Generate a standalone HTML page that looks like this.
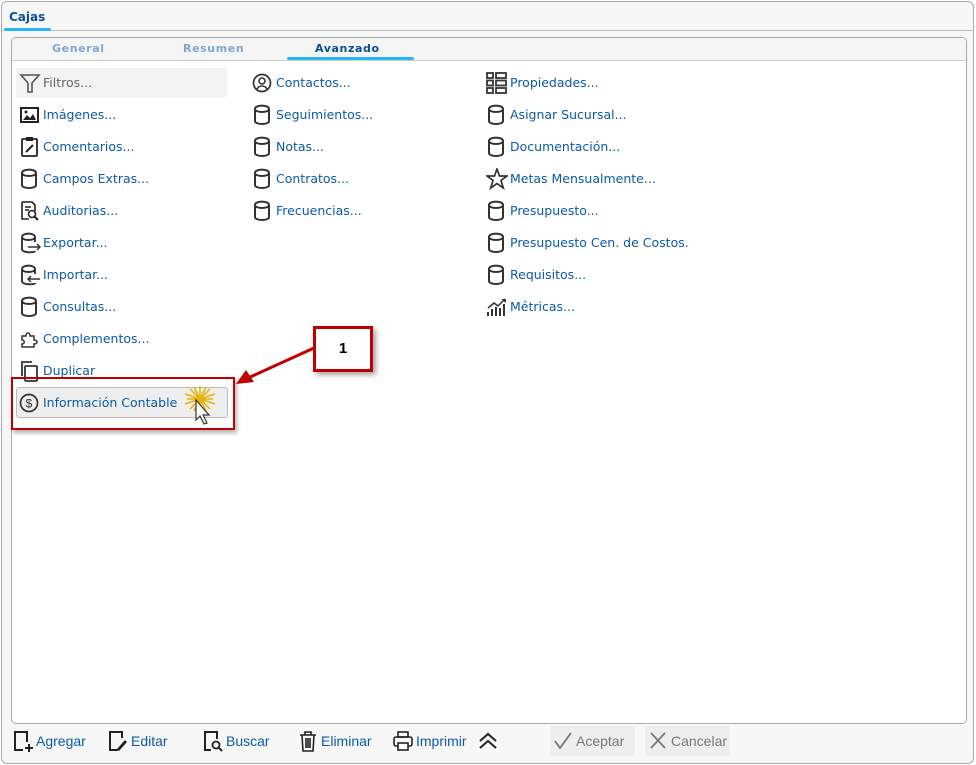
<!DOCTYPE html>
<html><head><meta charset="utf-8"><style>
*{margin:0;padding:0;box-sizing:border-box}
body{width:976px;height:765px;background:#fff;font-family:"DejaVu Sans","Liberation Sans",sans-serif;font-size:12.5px;position:relative;overflow:hidden}
.abs{position:absolute}
.outer{left:1px;top:1px;width:973px;height:763px;border:1px solid #aaa;border-radius:6px;background:#f7f7f7}
.panel{left:11px;top:37px;width:956px;height:687px;border:1px solid #aaa;border-radius:5px;background:#fff;overflow:hidden}
.it{position:absolute;height:26px;line-height:28px;color:#0b5aa8;white-space:nowrap}
.it svg{position:absolute;left:-24px;top:3px}
.tb{position:absolute;top:730px;height:22px;line-height:22px;color:#0b5aa8;font-family:"Liberation Sans",sans-serif;font-size:14px;white-space:nowrap}
.tb svg{position:absolute;left:-24px;top:0}
</style></head><body>
<div class="abs outer"></div>
<div class="abs" style="left:1px;top:30px;width:973px;border-top:1px solid #bbb"></div>
<div class="abs" style="left:9px;top:10px;font-weight:bold;color:#0b4f94;font-size:12px">Cajas</div>
<div class="abs" style="left:4px;top:28px;width:47px;height:3px;background:#29b6f6;border-radius:2px"></div>
<div class="abs panel">
 <div class="abs" style="left:0;top:0;width:956px;height:23px;background:#f5f5f5;border-bottom:1px solid #ccc"></div>
 <div class="abs" style="left:40px;top:4px;font-weight:bold;color:#7ea8d0;font-size:11px;letter-spacing:.6px">General</div>
 <div class="abs" style="left:171px;top:4px;font-weight:bold;color:#7ea8d0;font-size:11px;letter-spacing:.6px">Resumen</div>
 <div class="abs" style="left:303px;top:4px;font-weight:bold;color:#0b4f94;font-size:11px;letter-spacing:.6px">Avanzado</div>
 <div class="abs" style="left:275px;top:19px;width:127px;height:3px;background:#29b6f6;border-radius:2px"></div>
</div>
<svg width="0" height="0" style="position:absolute"><defs>
<g id="cyl" fill="none" stroke="#333" stroke-width="2"><path d="M3 5 C3 0.5 17 0.5 17 5 V17 C17 21 3 21 3 17 Z M3 5 C3 9 17 9 17 5"/></g>
</defs></svg>
<div class="abs" style="left:16px;top:68px;width:211px;height:30px;background:#f3f3f3;border-radius:2px"></div>
<div class="it" style="left:43px;top:69px;color:#666"><svg width="22" height="22"><path d="M2 3 H20 L13 11 V20 H9 V11 Z" fill="none" stroke="#555" stroke-width="1.6"/></svg>Filtros...</div>
<div class="it" style="left:43px;top:101px"><svg width="22" height="22"><rect x="2" y="4" width="17" height="14" fill="none" stroke="#222" stroke-width="2"/><path d="M4 16 L8 11 L11 14 L14 10 L17 16Z" fill="#222"/><circle cx="7" cy="8" r="1.5" fill="#222"/></svg>Imágenes...</div>
<div class="it" style="left:43px;top:133px"><svg width="22" height="22"><rect x="3" y="3" width="15" height="17" rx="1" fill="none" stroke="#222" stroke-width="1.8"/><rect x="7" y="1" width="7" height="4" fill="#222"/><path d="M7 16 L14 9" stroke="#222" stroke-width="2"/></svg>Comentarios...</div>
<div class="it" style="left:43px;top:165px"><svg width="22" height="22"><use href="#cyl"/></svg>Campos Extras...</div>
<div class="it" style="left:43px;top:197px"><svg width="22" height="22"><path d="M3 2 H13 L16 5 V11 M3 2 V19 H10" fill="none" stroke="#222" stroke-width="1.6"/><circle cx="13" cy="14" r="3.5" fill="none" stroke="#222" stroke-width="1.6"/><path d="M15.5 16.5 L19 20" stroke="#222" stroke-width="2"/><path d="M6 7H12M6 10H10" stroke="#222" stroke-width="1.4"/></svg>Auditorias...</div>
<div class="it" style="left:43px;top:229px"><svg width="22" height="22"><path d="M16 10 V5 C16 0.5 3 0.5 3 5 V17 C3 21 16 21 16 19 M3 5 C3 9 16 9 16 5" fill="none" stroke="#333" stroke-width="1.9"/><path d="M9 15H21M18 12L21 15L18 18" fill="none" stroke="#333" stroke-width="1.5"/></svg>Exportar...</div>
<div class="it" style="left:43px;top:261px"><svg width="22" height="22"><path d="M16 10 V5 C16 0.5 3 0.5 3 5 V17 C3 21 16 21 16 19 M3 5 C3 9 16 9 16 5" fill="none" stroke="#333" stroke-width="1.9"/><path d="M9 15H21M12 12L9 15L12 18" fill="none" stroke="#333" stroke-width="1.5"/></svg>Importar...</div>
<div class="it" style="left:43px;top:293px"><svg width="22" height="22"><use href="#cyl"/></svg>Consultas...</div>
<div class="it" style="left:43px;top:325px"><svg width="22" height="22"><path d="M3 8 H7 C7 4 11 4 11 8 H15 V12 C19 12 19 16 15 16 V19 H3 V16 C6 16 6 12 3 12Z" fill="none" stroke="#333" stroke-width="1.5"/></svg>Complementos...</div>
<div class="it" style="left:43px;top:357px"><svg width="22" height="22"><rect x="6" y="6" width="12" height="15" rx="1" fill="none" stroke="#333" stroke-width="1.8"/><path d="M3 16 V2 H13" fill="none" stroke="#333" stroke-width="1.8"/></svg>Duplicar</div>
<div class="abs" style="left:11px;top:377px;width:224px;height:53px;border:2px solid #c00000;box-shadow:2px 3px 4px rgba(0,0,0,.3)"></div>
<div class="abs" style="left:16px;top:387px;width:212px;height:31px;background:#eee;border:1px solid #bbb;border-radius:3px"></div>
<div class="it" style="left:43px;top:389px"><svg width="22" height="22"><circle cx="10" cy="11" r="8.5" fill="none" stroke="#333" stroke-width="1.7"/><text x="10" y="15.5" font-size="12" text-anchor="middle" fill="#333" font-family="Liberation Sans">$</text></svg>Información Contable</div>
<svg class="abs" style="left:180px;top:384px" width="40" height="44"><g stroke="#e8b000" stroke-width="1.5"><path d="M20 2L20 28M7 15H33M10 5L30 25M30 5L10 25M14 3L26 27M26 3L14 27M5 10L35 20M35 10L5 20"/></g><path d="M16 16 L16 36 L20 32 L24 40 L27 39 L23 31 L29 31 Z" fill="#fff" stroke="#333" stroke-width="1.2"/></svg>
<div class="abs" style="left:313px;top:326px;width:60px;height:46px;border:3px solid #c00000;background:#fff;box-shadow:3px 3px 5px rgba(0,0,0,.35);text-align:center;line-height:40px;font-family:'Liberation Sans',sans-serif;font-weight:bold;font-size:15px">1</div>
<svg class="abs" style="left:230px;top:340px" width="90" height="50"><path d="M84 8 L18 38" stroke="#c00000" stroke-width="3"/><path d="M6 44 L16 30 L24 42Z" fill="#c00000"/></svg>
<div class="it" style="left:276px;top:69px"><svg width="22" height="22"><circle cx="10" cy="11" r="8.5" fill="none" stroke="#333" stroke-width="1.7"/><circle cx="10" cy="9" r="3" fill="none" stroke="#333" stroke-width="1.6"/><path d="M5 17 C7 13 13 13 15 17" fill="none" stroke="#333" stroke-width="1.6"/></svg>Contactos...</div>
<div class="it" style="left:276px;top:101px"><svg width="22" height="22"><use href="#cyl"/></svg>Seguimientos...</div>
<div class="it" style="left:276px;top:133px"><svg width="22" height="22"><use href="#cyl"/></svg>Notas...</div>
<div class="it" style="left:276px;top:165px"><svg width="22" height="22"><use href="#cyl"/></svg>Contratos...</div>
<div class="it" style="left:276px;top:197px"><svg width="22" height="22"><use href="#cyl"/></svg>Frecuencias...</div>
<div class="it" style="left:510px;top:69px"><svg width="22" height="22"><g fill="none" stroke="#333" stroke-width="1.8"><rect x="1" y="1" width="6" height="5"/><rect x="1" y="8.5" width="6" height="5"/><rect x="1" y="16" width="6" height="5"/><rect x="10" y="1" width="10" height="5"/><rect x="10" y="8.5" width="10" height="5"/><rect x="10" y="16" width="10" height="5"/></g></svg>Propiedades...</div>
<div class="it" style="left:510px;top:101px"><svg width="22" height="22"><use href="#cyl"/></svg>Asignar Sucursal...</div>
<div class="it" style="left:510px;top:133px"><svg width="22" height="22"><use href="#cyl"/></svg>Documentación...</div>
<div class="it" style="left:510px;top:165px"><svg width="22" height="22"><path d="M11 1 L13.5 8 H21 L15 12.5 L17.3 20 L11 15.5 L4.7 20 L7 12.5 L1 8 H8.5Z" fill="none" stroke="#333" stroke-width="1.7"/></svg>Metas Mensualmente...</div>
<div class="it" style="left:510px;top:197px"><svg width="22" height="22"><use href="#cyl"/></svg>Presupuesto...</div>
<div class="it" style="left:510px;top:229px"><svg width="22" height="22"><use href="#cyl"/></svg>Presupuesto Cen. de Costos.</div>
<div class="it" style="left:510px;top:261px"><svg width="22" height="22"><use href="#cyl"/></svg>Requisitos...</div>
<div class="it" style="left:510px;top:293px"><svg width="22" height="22"><g stroke="#333" stroke-width="2"><path d="M2 20V16M6 20V13M10 20V11M14 20V12M18 20V8"/></g><path d="M2 12 L8 7 L12 10 L19 3" fill="none" stroke="#333" stroke-width="1.5"/><path d="M15 3H20V7Z" fill="#333"/></svg>Métricas...</div>
<div class="tb" style="left:36px"><svg width="22" height="22"><path d="M11 20H3V2H15V12" fill="none" stroke="#222" stroke-width="2"/><path d="M17 14V22M13 18H21" stroke="#222" stroke-width="2"/></svg>Agregar</div>
<div class="tb" style="left:131px"><svg width="22" height="22"><path d="M11 20H3V2H15V8" fill="none" stroke="#222" stroke-width="2"/><path d="M10 19L18 10L20 12L12 21Z" fill="#222"/></svg>Editar</div>
<div class="tb" style="left:226px"><svg width="22" height="22"><path d="M9 20H3V2H15V9" fill="none" stroke="#222" stroke-width="2"/><circle cx="14" cy="15" r="3.5" fill="none" stroke="#222" stroke-width="1.8"/><path d="M16.5 17.5L20 21" stroke="#222" stroke-width="2"/></svg>Buscar</div>
<div class="tb" style="left:321px"><svg width="22" height="22"><path d="M3 5H19M8 5V2H14V5M5 5L6 21H16L17 5M9 8V18M11 8V18M13 8V18" fill="none" stroke="#222" stroke-width="1.6"/></svg>Eliminar</div>
<div class="tb" style="left:416px"><svg width="22" height="22"><rect x="6" y="2" width="10" height="5" fill="none" stroke="#222" stroke-width="1.6"/><rect x="2" y="7" width="18" height="9" rx="2" fill="none" stroke="#222" stroke-width="1.6"/><rect x="6" y="13" width="10" height="7" fill="#fff" stroke="#222" stroke-width="1.6"/></svg>Imprimir</div>
<svg class="abs" style="left:477px;top:731px" width="22" height="20"><path d="M3 10L11 3L19 10M3 17L11 10L19 17" fill="none" stroke="#222" stroke-width="2"/></svg>
<div class="abs" style="left:550px;top:726px;width:85px;height:30px;background:#eee"></div>
<div class="tb" style="left:576px;top:730px;color:#777"><svg width="22" height="22"><path d="M3 11L8 18L19 3" fill="none" stroke="#777" stroke-width="1.8"/></svg>Aceptar</div>
<div class="abs" style="left:645px;top:726px;width:85px;height:30px;background:#eee"></div>
<div class="tb" style="left:671px;top:730px;color:#777"><svg width="22" height="22"><path d="M4 3L18 18M18 3L4 18" stroke="#777" stroke-width="1.8"/></svg>Cancelar</div>
</body></html>
